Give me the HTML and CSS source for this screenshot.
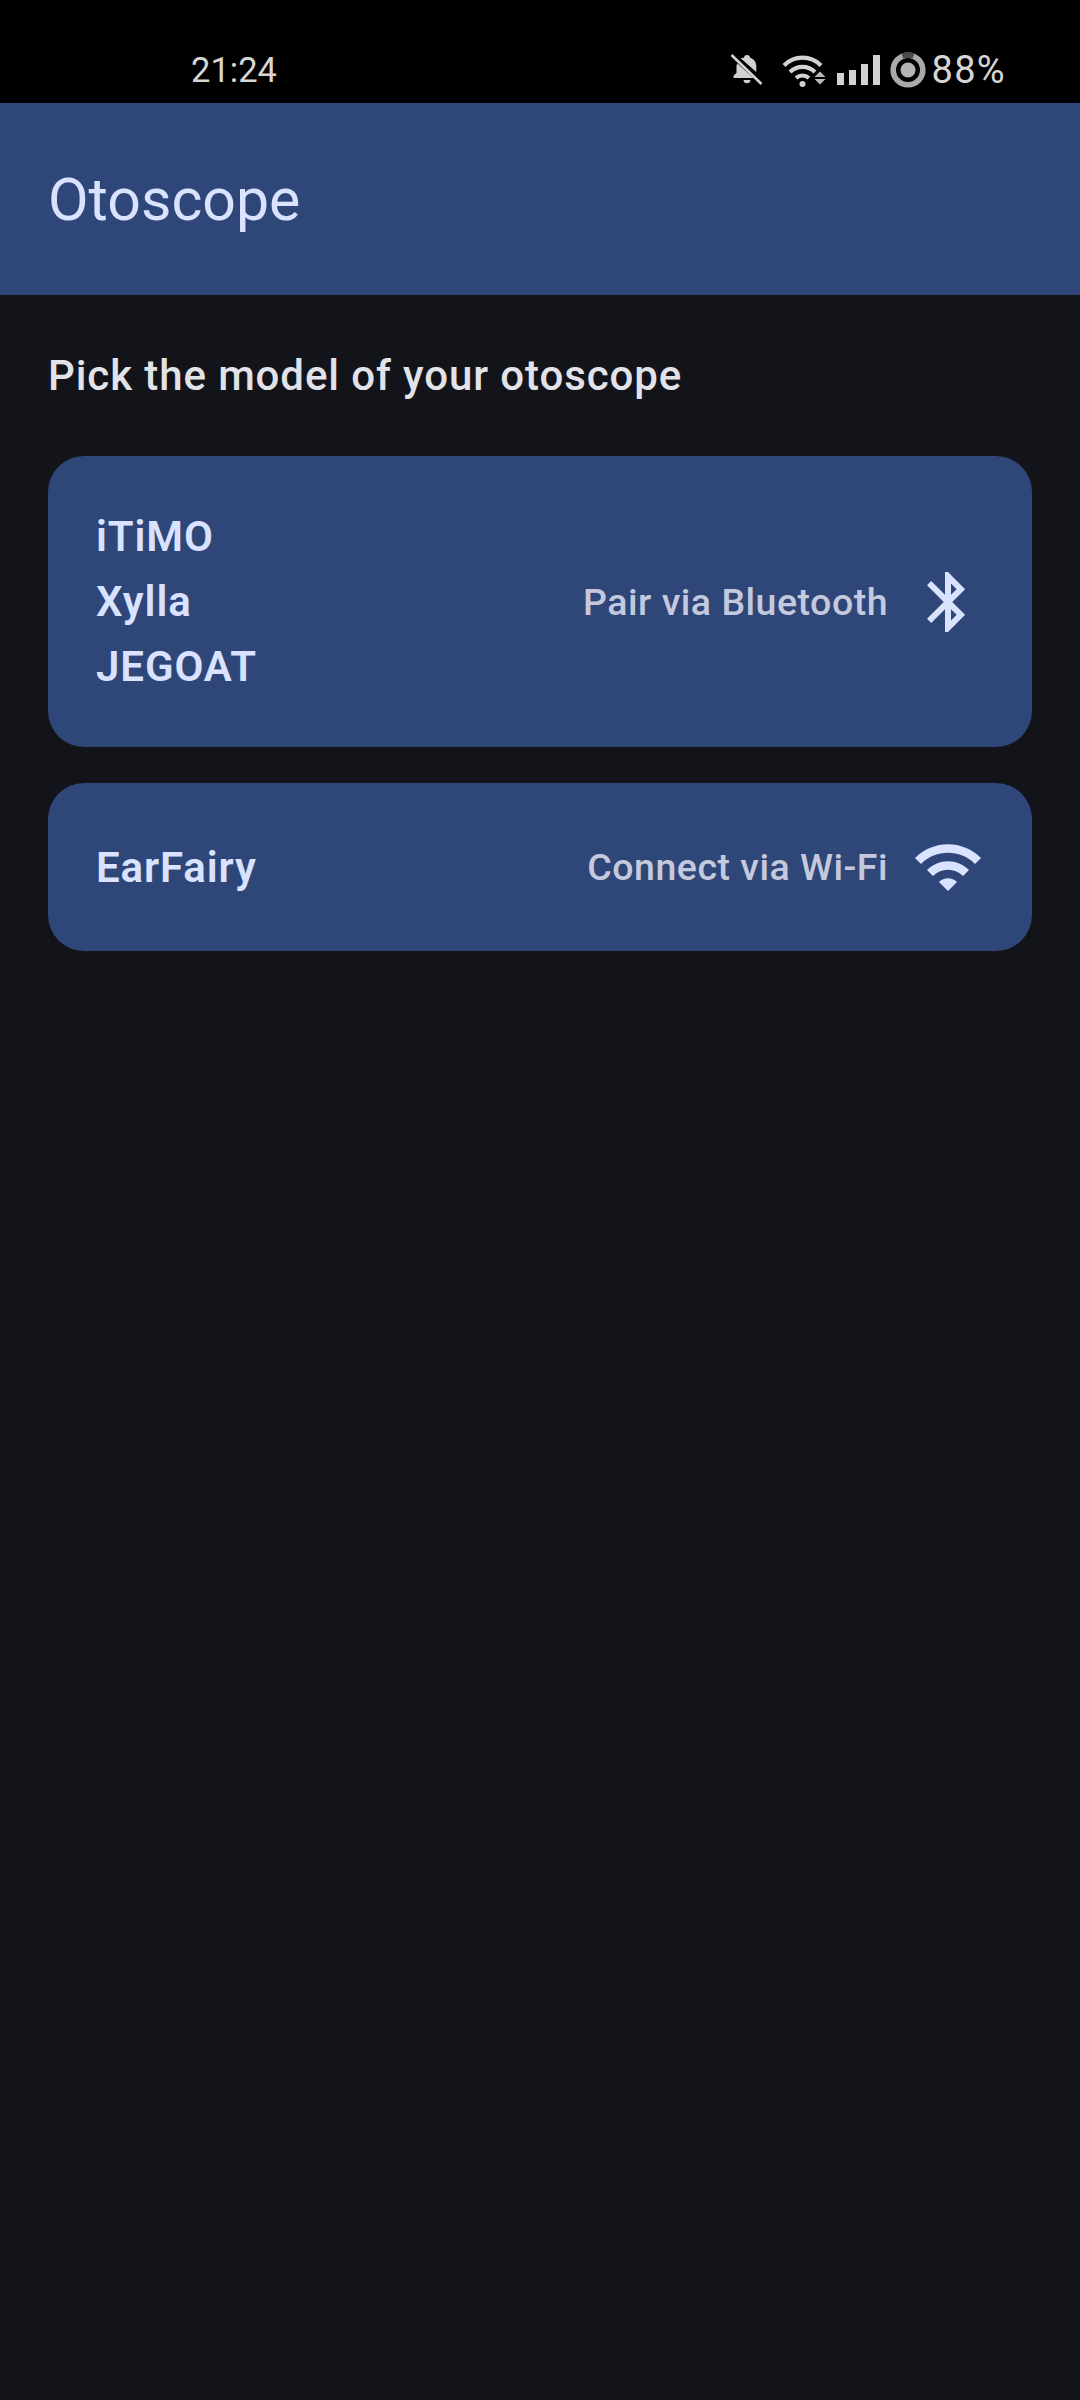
FILE: index.html
```html
<!DOCTYPE html>
<html lang="en">
<head>
    <meta charset="UTF-8">
    <title>Otoscope</title>
    <link rel="stylesheet" href="styles.css">
</head>
<body>
    <div class="status-bar">
        <span class="status-time">21:24</span>
        <div class="status-icons">
            <svg class="icon-bell" width="34" height="34" viewBox="0 0 34 34">
                <path fill="#d2d2d2" d="M17 2c2 0 3 1.300 3 2.800 4.300 1.200 6.300 4.700 6.300 9v5.200l-15.700-13.800C12 4.800 13 4.400 14 4.800 14 3.300 15 2 17 2zM7.500 10.500l16 14.500H3.500v-2.200l3-3v-6.500c0-1 .3-1.900 1-2.800zM13.500 27h7c0 2-1.500 3.300-3.500 3.300s-3.500-1.300-3.500-3.300z"/>
                <path stroke="#d2d2d2" stroke-width="2.600" d="M1.500 2l30 29"/>
            </svg>
            <svg class="icon-net" width="44" height="36" viewBox="0 0 44 36">
                <g fill="none" stroke="#d2d2d2" stroke-width="4.200">
                    <path d="M2 13.500c10-10.500 27-10.500 37 0"/>
                    <path d="M8 20c7-6.800 18-6.800 25 0"/>
                    <path d="M14 26c3.800-3.300 9-3.300 13 0"/>
                </g>
                <circle cx="20.500" cy="32" r="3" fill="#d2d2d2"/>
                <path fill="#b8b8b8" d="M38 19.500l5.500 5.500h-11zM32.500 27h11L38 32.500z"/>
            </svg>
            <div class="signal">
                <span class="bar bar-1"></span>
                <span class="bar bar-2"></span>
                <span class="bar bar-3"></span>
                <span class="bar bar-4"></span>
            </div>
            <svg class="icon-battery" width="36" height="36" viewBox="0 0 36 36">
                <circle cx="18" cy="18" r="14.800" fill="none" stroke="#a9a9a9" stroke-width="5.600"/>
                <circle cx="18" cy="18" r="14.800" fill="none" stroke="#4a4a4a" stroke-width="5.600" stroke-dasharray="11.200 81.800" transform="rotate(-112 18 18)"/>
                <circle cx="18" cy="18" r="7.500" fill="#b4b4b4"/>
            </svg>
            <span class="status-battery">88%</span>
        </div>
    </div>

    <div class="app-bar">
        <h1>Otoscope</h1>
    </div>

    <div class="content">
        <h2>Pick the model of your otoscope</h2>

        <div class="card">
            <div class="models">
                <div>iTiMO</div>
                <div>Xylla</div>
                <div>JEGOAT</div>
            </div>
            <span class="card-label">Pair via Bluetooth</span>
            <svg class="card-icon" width="72" height="72" viewBox="0 0 24 24">
                <path d="M17.710 7.710L12 2h-1v7.590L6.410 5 5 6.410 10.590 12 5 17.590 6.410 19 11 14.410V22h1l5.710-5.710-4.300-4.290 4.300-4.290zM13 5.830l1.880 1.880L13 9.590V5.830zm1.880 10.460L13 18.170v-3.760l1.880 1.880z"/>
            </svg>
        </div>

        <div class="card">
            <div class="models">
                <div>EarFairy</div>
            </div>
            <span class="card-label">Connect via Wi-Fi</span>
            <svg class="card-icon" width="72" height="72" viewBox="0 0 24 24">
                <path d="M1 9l2 2c4.970-4.970 13.030-4.970 18 0l2-2C16.930 2.930 7.080 2.930 1 9zm8 8l3 3 3-3c-1.650-1.660-4.340-1.660-6 0zm-4-4l2 2c2.760-2.760 7.240-2.760 10 0l2-2C15.140 9.140 8.870 9.140 5 13z"/>
            </svg>
        </div>
    </div>
</body>
</html>
```

FILE: styles.css
```css
html, body {
    margin: 0;
    height: 2400px;
}

body {
    font-family: Roboto, "Noto Sans", sans-serif;
    background-color: #121419;
    color: #e2e2e9;
}

/* Status bar */
.status-bar {
    display: flex;
    justify-content: space-between;
    align-items: center;
    height: 103px;
    box-sizing: border-box;
    padding: 36px 74px 0 191px;
    background-color: #000;
    color: #d6d6d6;
    font-size: 34.500px;
}

.status-icons {
    display: flex;
    align-items: center;
}

.icon-bell {
    margin-right: 18px;
}

.icon-net {
    margin-right: 11px;
}

.signal {
    display: flex;
    align-items: flex-end;
    gap: 5.500px;
    height: 31px;
    margin-right: 10px;
}

.bar {
    width: 6.500px;
    background-color: #d2d2d2;
}

.bar-1 { height: 12px; }
.bar-2 { height: 15px; }
.bar-3 { height: 21px; }
.bar-4 { height: 30px; }

.status-battery {
    margin-left: 6px;
    font-size: 38px;
    letter-spacing: 1.300px;
}

/* App bar */
.app-bar {
    display: flex;
    align-items: center;
    height: 192px;
    padding: 0 48px;
    background-color: #2f4678;
    color: #d9e2ff;
}

.app-bar h1 {
    margin: 0;
    font-size: 59px;
    font-weight: 400;
}

/* Content */
.content {
    padding: 48px;
}

.content h2 {
    margin: 0 0 48px;
    font-size: 42px;
    line-height: 65px;
    font-weight: 500;
    letter-spacing: 0.900px;
}

.card {
    display: flex;
    align-items: center;
    padding: 48px;
    margin-bottom: 36px;
    border-radius: 36px;
    background-color: #2f4678;
    color: #d9e2ff;
}

.models {
    flex: 1;
    font-size: 42px;
    line-height: 65px;
    font-weight: 600;
    letter-spacing: 0.900px;
}

.card-label {
    margin-right: 24px;
    font-size: 37.500px;
    font-weight: 500;
    letter-spacing: 0.500px;
    color: #c5c9dd;
}

.card-icon {
    fill: #d9e2ff;
}
```
